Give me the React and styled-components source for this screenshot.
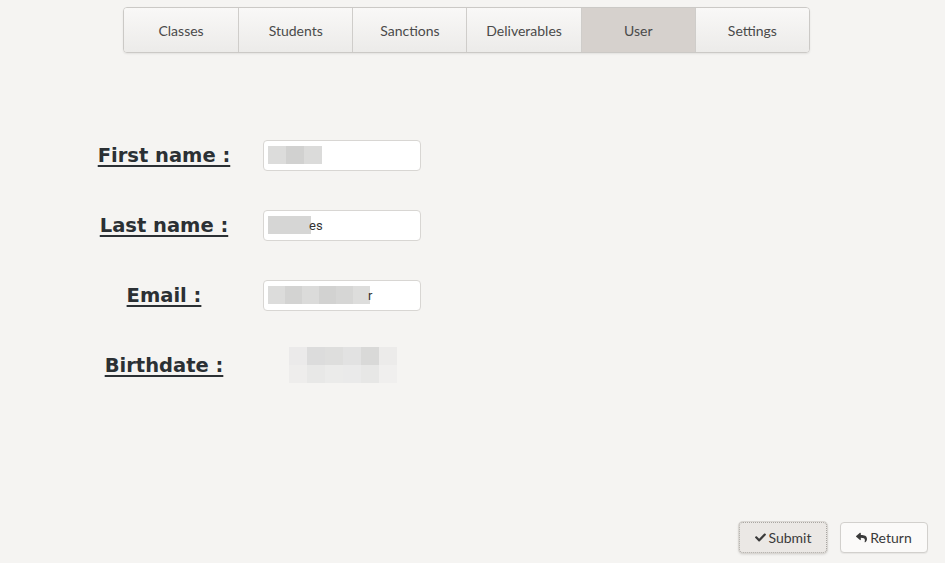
import React from "react";
import styled, { createGlobalStyle } from "styled-components";
import { FaCheck, FaReply } from "react-icons/fa";

const GlobalStyle = createGlobalStyle`
  html, body {
    margin: 0;
    padding: 0;
    background: #f5f4f2;
  }
`;

const Page = styled.div`
  min-height: 563px;
  height: 100vh;
  box-sizing: border-box;
  display: flex;
  flex-direction: column;
  font-family: Lato, "Open Sans", sans-serif;
`;

const NavBar = styled.nav`
  margin: 7px 0 0 123px;
  width: 687px;
  height: 46px;
  display: grid;
  grid-template-columns: repeat(6, 1fr);
  border: 1px solid #cbc9c6;
  border-radius: 4px;
  box-sizing: border-box;
  overflow: hidden;
  box-shadow: 0 1px 2px rgba(0, 0, 0, 0.08);
`;

const Tab = styled.div`
  display: flex;
  align-items: center;
  justify-content: center;
  font-size: 14px;
  color: #4a4a4a;
  background: ${(p) => (p.$active ? "#d6d1cd" : "linear-gradient(#f9f8f7, #ecebe9)")};
  border-left: ${(p) => (p.$first ? "none" : "1px solid #cfcdca")};
`;

const Form = styled.div`
  margin: 67px 0 0 88px;
  display: grid;
  grid-template-columns: 152px 158px;
  grid-auto-rows: 70px;
  column-gap: 23px;
  align-items: center;
`;

const Label = styled.label`
  justify-self: center;
  font-family: "DejaVu Sans", Verdana, sans-serif;
  font-weight: bold;
  font-size: 19.5px;
  color: #2b3034;
  text-decoration: underline;
  text-decoration-thickness: 2px;
  text-underline-offset: 3px;
`;

const Field = styled.div`
  height: 31px;
  box-sizing: border-box;
  background: #ffffff;
  border: 1px solid #d8d6d3;
  border-radius: 4px;
  display: flex;
  align-items: center;
  padding-left: 4px;
  font-family: Roboto, sans-serif;
  font-size: 13px;
  color: #333;
`;

const Value = styled.div`
  padding-left: 26px;
  display: flex;
  align-items: center;
`;

const Pixels = styled.div`
  display: grid;
  grid-template-columns: repeat(${(p) => p.$cols}, ${(p) => p.$w}px);
  grid-auto-rows: ${(p) => p.$h}px;
`;

const Cell = styled.span`
  background: ${(p) => p.$c};
`;

const Tail = styled.span`
  margin-left: -2px;
`;

const Footer = styled.div`
  margin-top: auto;
  display: flex;
  justify-content: flex-end;
  gap: 13px;
  padding: 0 17px 10px 0;
`;

const Button = styled.button`
  width: 88px;
  height: 31px;
  display: flex;
  align-items: center;
  justify-content: center;
  gap: 3px;
  font-family: Lato, "Open Sans", sans-serif;
  font-size: 14px;
  color: #3a3a3a;
  border-radius: 4px;
  background: ${(p) => (p.$primary ? "#ebe8e5" : "#fbfaf9")};
  border: ${(p) => (p.$primary ? "1px dotted #a9a6a2" : "1px solid #d2d0cd")};
  box-shadow: ${(p) =>
    p.$primary ? "0 0 0 1px #d9d6d2, 0 1px 3px rgba(0,0,0,0.18)" : "0 1px 1px rgba(0,0,0,0.06)"};
  svg {
    font-size: 11px;
  }
`;

const tabs = ["Classes", "Students", "Sanctions", "Deliverables", "User", "Settings"];

function Blur({ cells, cols, w, h }) {
  return (
    <Pixels $cols={cols} $w={w} $h={h}>
      {cells.map((c, i) => (
        <Cell key={i} $c={c} />
      ))}
    </Pixels>
  );
}

export default function App() {
  return (
    <Page>
      <GlobalStyle />
      <NavBar>
        {tabs.map((t, i) => (
          <Tab key={t} $first={i === 0} $active={t === "User"}>
            {t}
          </Tab>
        ))}
      </NavBar>

      <Form>
        <Label>First name :</Label>
        <Field>
          <Blur cols={3} w={18} h={18} cells={["#dcdcdb", "#d1d1d0", "#dbdbda"]} />
        </Field>

        <Label>Last name :</Label>
        <Field>
          <Blur cols={1} w={43} h={18} cells={["#d6d6d5"]} />
          <Tail>es</Tail>
        </Field>

        <Label>Email :</Label>
        <Field>
          <Blur
            cols={6}
            w={17}
            h={18}
            cells={["#dcdcdb", "#d3d3d2", "#dbdbda", "#d2d2d1", "#d6d6d5", "#dddddc"]}
          />
          <Tail>r</Tail>
        </Field>

        <Label>Birthdate :</Label>
        <Value>
          <Blur
            cols={6}
            w={18}
            h={18}
            cells={[
              "#ebeaea", "#dcdcdc", "#dededd", "#e2e2e2", "#d9d9d8", "#ecebea",
              "#eeedec", "#e8e8e7", "#ebebea", "#eaeaea", "#e7e7e6", "#f0efee",
            ]}
          />
        </Value>
      </Form>

      <Footer>
        <Button $primary>
          <FaCheck />
          Submit
        </Button>
        <Button>
          <FaReply />
          Return
        </Button>
      </Footer>
    </Page>
  );
}
